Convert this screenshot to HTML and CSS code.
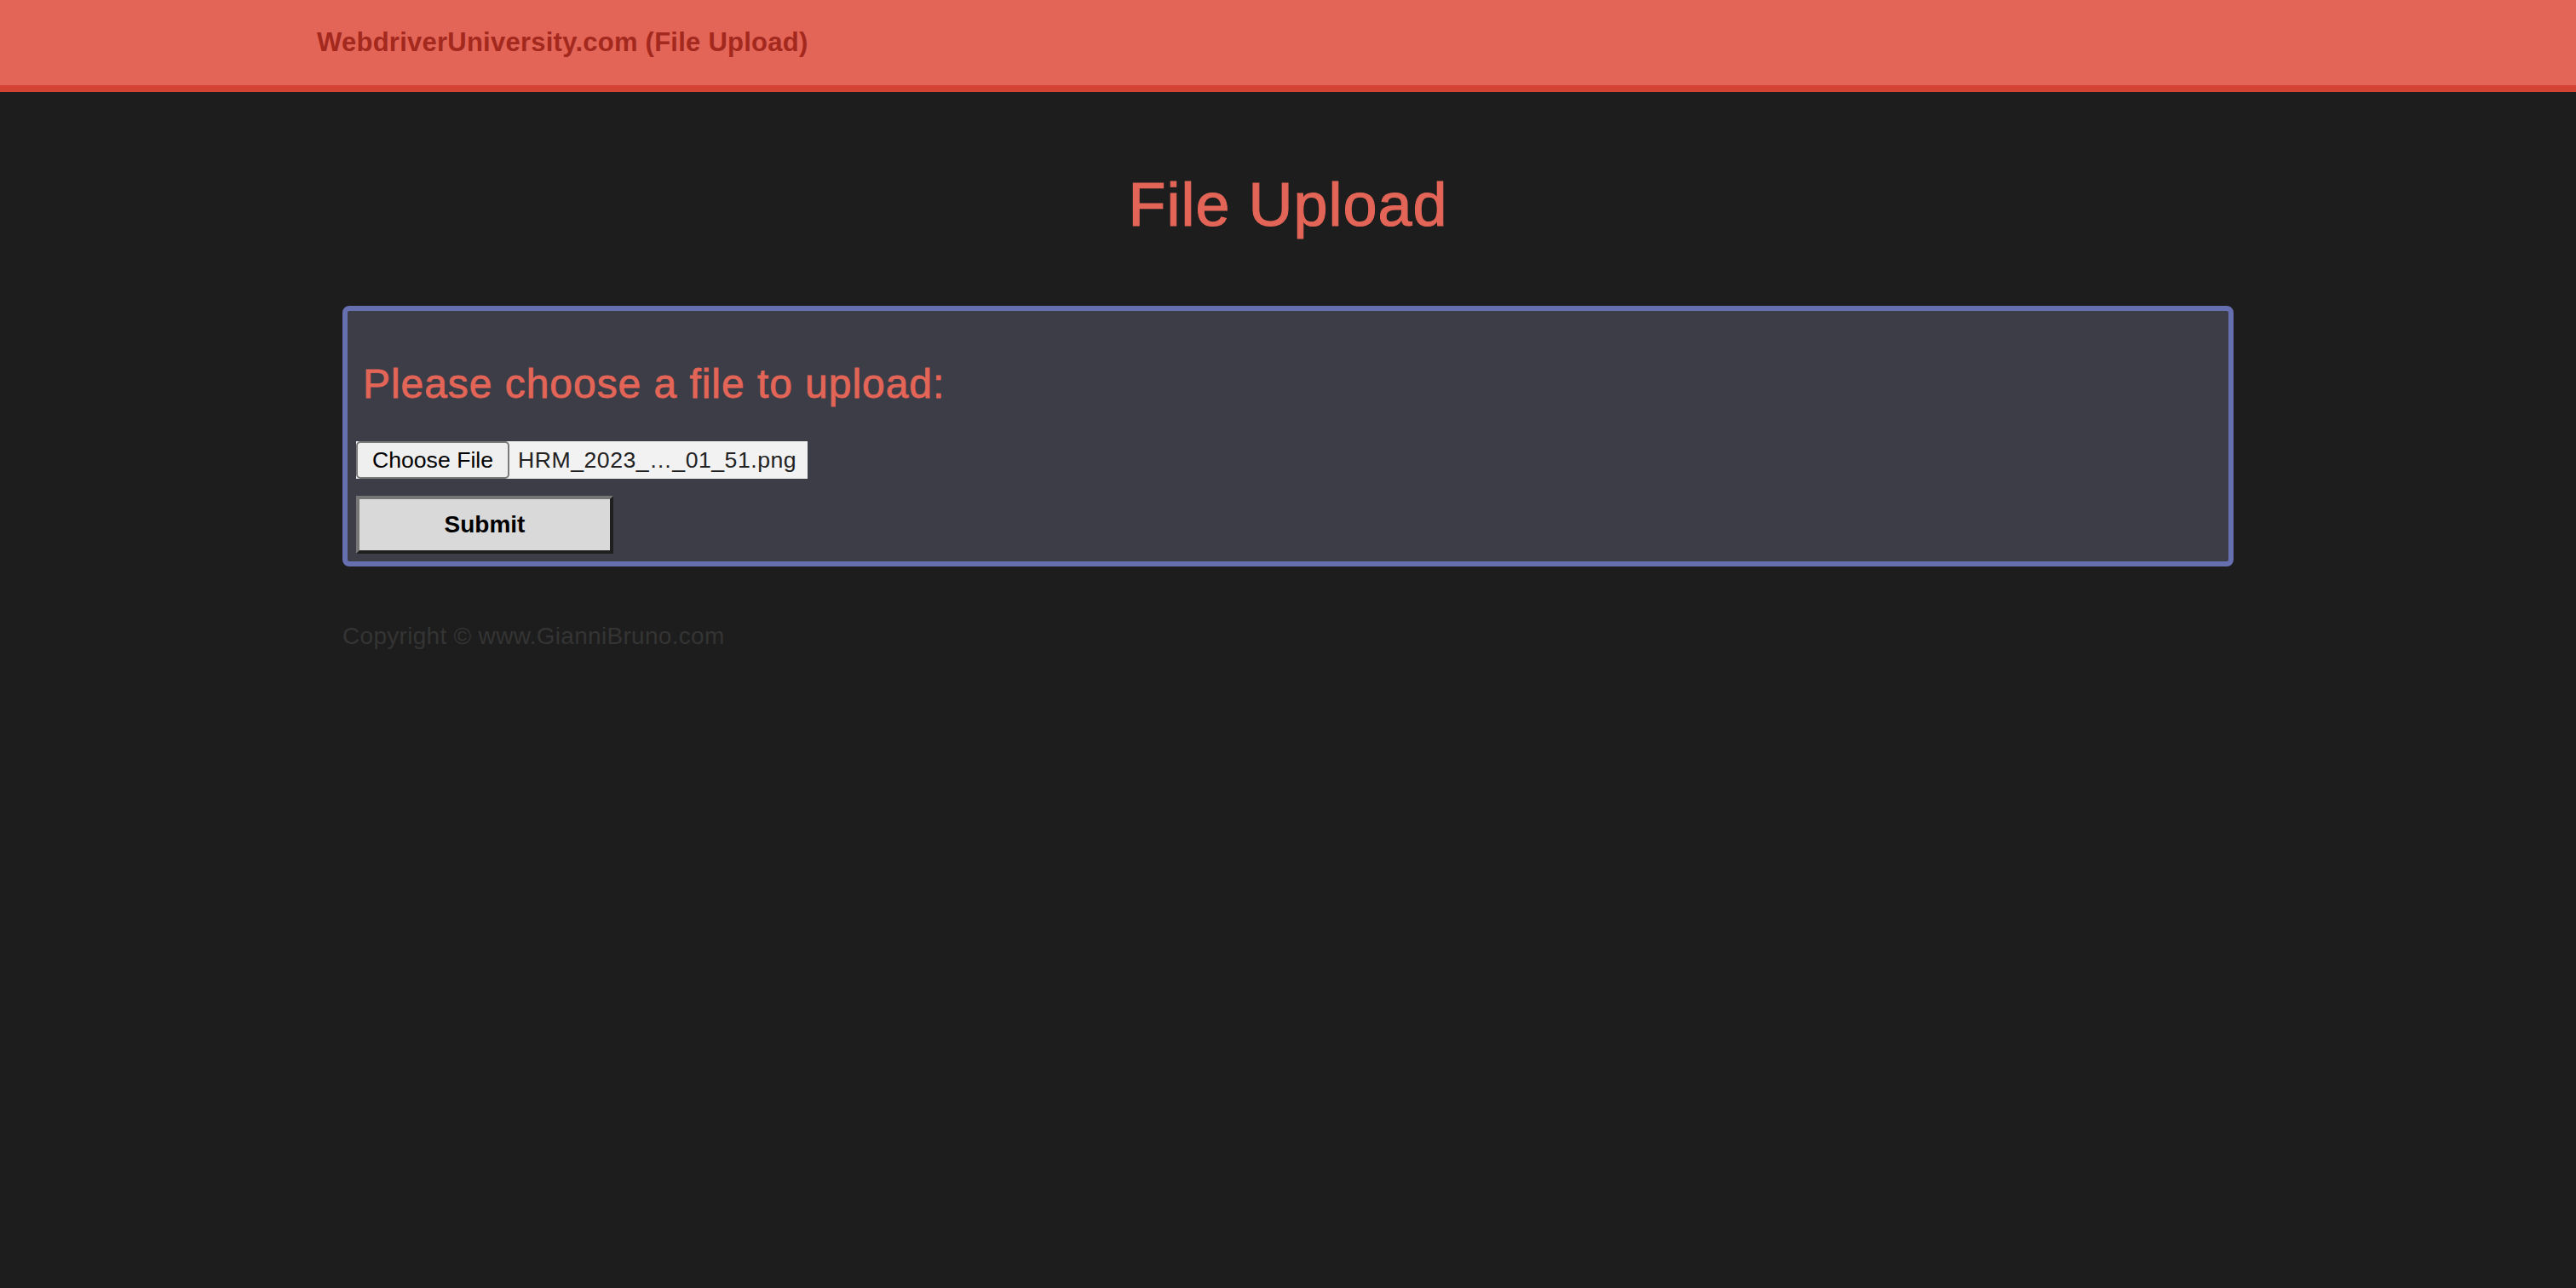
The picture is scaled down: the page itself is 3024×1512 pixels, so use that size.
FILE: index.html
```html
<!DOCTYPE html>
<html lang="en">
<head>
<meta charset="utf-8">
<title>WebdriverUniversity.com (File Upload)</title>
<link rel="stylesheet" href="styles.css">
</head>
<body>
<header class="topbar">
  <div class="topbar-inner">
    <a class="brand" href="#">WebdriverUniversity.com (File Upload)</a>
  </div>
</header>
<main class="page">
  <h1 class="title">File Upload</h1>
  <section class="upload-box">
    <form class="upload-form">
      <h3 class="upload-heading">Please choose a file to upload:</h3>
      <div class="file-input">
        <span class="file-btn">Choose File</span>
        <span class="file-name">HRM_2023_…_01_51.png</span>
      </div>
      <button type="button" class="submit-btn">Submit</button>
    </form>
  </section>
  <p class="copyright">Copyright © www.GianniBruno.com</p>
</main>
</body>
</html>
```
FILE: styles.css
```css
html, body {
  margin: 0;
  padding: 0;
}
body {
  background: #1d1d1d;
  font-family: "Liberation Sans", Arial, sans-serif;
  min-height: 1512px;
}
.topbar {
  height: 100px;
  background: #e36557;
  border-bottom: 8px solid #d44234;
}
.topbar-inner {
  width: 2340px;
  margin: 0 auto;
  padding: 0 30px;
  box-sizing: border-box;
}
.brand {
  display: inline-block;
  line-height: 100px;
  font-size: 31px;
  font-weight: bold;
  letter-spacing: 0.25px;
  color: #a3281d;
  text-decoration: none;
}
.page {
  width: 2340px;
  margin: 0 auto;
  padding: 0 60px;
  box-sizing: border-box;
}
.title {
  margin: 93px 0 79px;
  font-size: 72px;
  line-height: 79px;
  font-weight: normal;
  letter-spacing: 1px;
  -webkit-text-stroke: 1.2px #e36557;
  color: #e36557;
  text-align: center;
}
.upload-box {
  border: 6px solid #6670b0;
  border-radius: 8px;
  background: #3d3d47;
}
.upload-form {
  padding: 0 10px 9px;
  display: flex;
  flex-direction: column;
  align-items: flex-start;
}
.upload-heading {
  margin: 59px 0 41px 8px;
  font-size: 48px;
  line-height: 53px;
  font-weight: normal;
  letter-spacing: 0.95px;
  -webkit-text-stroke: 0.8px #e36557;
  color: #e36557;
}
.file-input {
  display: flex;
  align-items: stretch;
  height: 44px;
  background: #f2f2f2;
  font-size: 26.67px;
  color: #1a1a1a;
}
.file-btn {
  display: flex;
  align-items: center;
  width: 180px;
  box-sizing: border-box;
  justify-content: center;
  border: 2px solid #7a7a7a;
  border-radius: 5px;
  background: #efefef;
  color: #000;
}
.file-name {
  display: flex;
  align-items: center;
  width: 350px;
  box-sizing: border-box;
  padding: 0 0 0 10px;
  letter-spacing: 0.5px;
  color: #222;
}
.submit-btn {
  margin-top: 20px;
  width: 302px;
  height: 68px;
  border: 4px solid;
  border-color: #767676 #1f1f1f #1f1f1f #767676;
  background: #d9d9d9;
  font-family: "Liberation Sans", Arial, sans-serif;
  font-size: 28px;
  font-weight: bold;
  color: #000;
  padding: 0;
}
.copyright {
  margin: 62px 0 0;
  font-size: 28px;
  line-height: 40px;
  letter-spacing: 0.3px;
  color: #343434;
}
```
